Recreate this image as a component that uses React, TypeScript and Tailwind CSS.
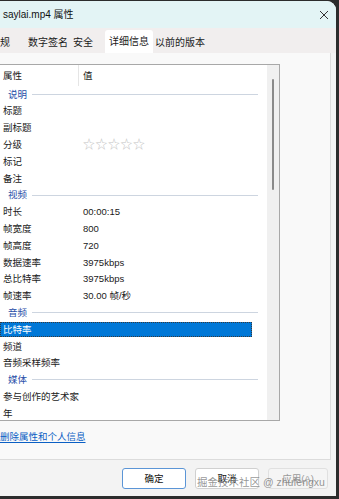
import React from 'react';

type Row =
  | { kind: 'group'; label: string }
  | { kind: 'item'; label: string; value?: string; stars?: boolean; selected?: boolean };

const rows: Row[] = [
  { kind: 'group', label: '说明' },
  { kind: 'item', label: '标题' },
  { kind: 'item', label: '副标题' },
  { kind: 'item', label: '分级', stars: true },
  { kind: 'item', label: '标记' },
  { kind: 'item', label: '备注' },
  { kind: 'group', label: '视频' },
  { kind: 'item', label: '时长', value: '00:00:15' },
  { kind: 'item', label: '帧宽度', value: '800' },
  { kind: 'item', label: '帧高度', value: '720' },
  { kind: 'item', label: '数据速率', value: '3975kbps' },
  { kind: 'item', label: '总比特率', value: '3975kbps' },
  { kind: 'item', label: '帧速率', value: '30.00 帧/秒' },
  { kind: 'group', label: '音频' },
  { kind: 'item', label: '比特率', selected: true },
  { kind: 'item', label: '频道' },
  { kind: 'item', label: '音频采样频率' },
  { kind: 'group', label: '媒体' },
  { kind: 'item', label: '参与创作的艺术家' },
  { kind: 'item', label: '年' },
];

function PropRow({ row }: { row: Row }) {
  if (row.kind === 'group') {
    return (
      <div className="h-[16.8px] flex items-center pl-[8px] pr-[9px] shrink-0">
        <span className="text-[#2a4fa8]">{row.label}</span>
        <div className="flex-1 h-px bg-[#cdd5e0] ml-[5px]" />
      </div>
    );
  }
  return (
    <div className="h-[16.8px] flex items-center shrink-0 pr-[15px]">
      <div
        className={
          row.selected
            ? 'flex items-center w-full h-[15px] bg-[#0078d7] text-white outline outline-1 outline-dotted outline-[#3a3a3a] -outline-offset-1'
            : 'flex items-center w-full h-[15px]'
        }
      >
        <span className="w-[83px] pl-[3px] whitespace-nowrap">{row.label}</span>
        {row.value && <span className="whitespace-nowrap">{row.value}</span>}
        {row.stars && (
          <span className="flex gap-[0.5px] text-[#c4c4c4] text-[12px] leading-none">
            <span>☆</span>
            <span>☆</span>
            <span>☆</span>
            <span>☆</span>
            <span>☆</span>
          </span>
        )}
      </div>
    </div>
  );
}

export default function App() {
  return (
    <div className="w-[339px] h-[499px] bg-[#2c2c2c] relative overflow-hidden font-['Liberation_Sans','Noto_Sans_CJK_SC',sans-serif] text-[9.5px] text-[#1a1a1a] leading-none">
      <div className="w-[336px] h-[495px] bg-[#f3f3f3] rounded-tr-[9px] mt-px flex flex-col overflow-hidden">
        {/* title bar */}
        <div className="h-[27px] bg-[#e3f4f5] flex items-center justify-between pl-[3px] pr-[7px] shrink-0">
          <span className="text-[10px] text-[#111]">saylai.mp4 属性</span>
          <svg width="10" height="10" viewBox="0 0 10 10" className="text-[#333]">
            <path d="M1 1 L9 9 M9 1 L1 9" stroke="currentColor" strokeWidth="1" />
          </svg>
        </div>

        {/* tabs */}
        <div className="h-[25px] bg-[#f1eeee] flex items-end shrink-0 text-[10px]">
          <div className="h-[21px] flex items-center w-[28px]">规</div>
          <div className="h-[21px] flex items-center w-[45px]">数字签名</div>
          <div className="h-[21px] flex items-center w-[30px]">安全</div>
          <div className="h-[23px] flex items-center justify-center w-[48px] ml-[2px] bg-white rounded-t-[3px]">详细信息</div>
          <div className="h-[21px] flex items-center pl-[2px]">以前的版本</div>
        </div>

        {/* panel */}
        <div className="h-[407px] w-[331px] bg-[#f9f9f9] border-r border-[#dcdcdc] border-b flex flex-col shrink-0 pt-[11px]">
          <div className="w-[280px] h-[357px] bg-white border border-l-0 border-[#a8a8a8] flex overflow-hidden">
            <div className="flex-1 flex flex-col overflow-hidden">
              <div className="h-[21px] flex items-center shrink-0">
                <span className="w-[78px] pl-[3px]">属性</span>
                <div className="w-px h-full bg-[#e5e5e5]" />
                <span className="pl-[4px]">值</span>
              </div>
              {rows.map((r, i) => (
                <PropRow key={i} row={r} />
              ))}
            </div>
            <div className="w-[12px] bg-[#f0f0f0] flex justify-center pt-[14px]">
              <div className="w-[2px] h-[111px] bg-[#8a8a8a] rounded-full" />
            </div>
          </div>
          <a className="mt-[11px] text-[#0a5fc4] underline underline-offset-2 w-fit cursor-pointer">删除属性和个人信息</a>
        </div>

        {/* footer */}
        <div className="flex-1 flex items-start justify-end gap-[9px] pt-[8px] pr-[8px]">
          <button className="w-[64px] h-[21px] bg-white border border-[#5b95d6] rounded-[3px] text-[9.5px] text-[#111]">确定</button>
          <button className="w-[64px] h-[21px] bg-white border border-[#d0d0d0] rounded-[3px] text-[9.5px] text-[#111]">取消</button>
          <button className="w-[60px] h-[21px] bg-[#f5f5f5] border border-[#e0e0e0] rounded-[3px] text-[9.5px] text-[#9a9a9a]">应用(A)</button>
        </div>
      </div>

      {/* watermark */}
      <div className="absolute left-[197px] top-[477px] text-[10.5px] text-[#7a7a7a]/80 whitespace-nowrap">
        掘金技术社区 @ zhufengxu
      </div>
    </div>
  );
}
